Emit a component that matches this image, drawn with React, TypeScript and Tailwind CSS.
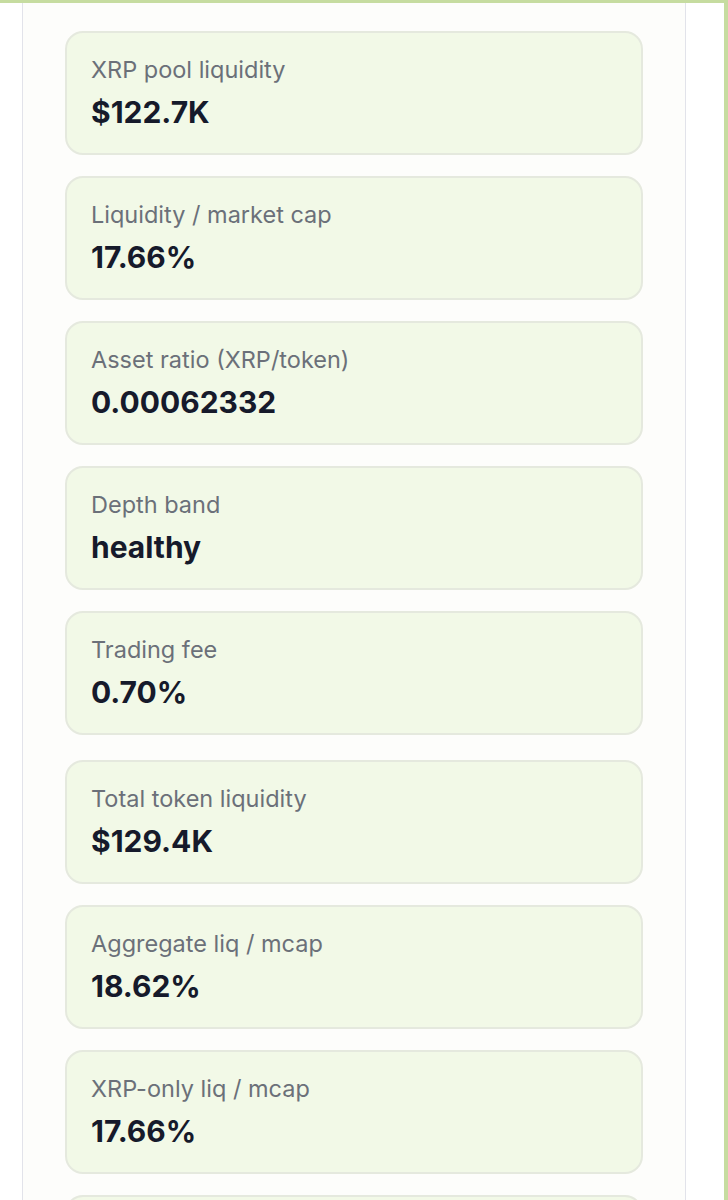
const metrics: { label: string; value: string; extra?: boolean }[] = [
  { label: 'XRP pool liquidity', value: '$122.7K' },
  { label: 'Liquidity / market cap', value: '17.66%' },
  { label: 'Asset ratio (XRP/token)', value: '0.00062332' },
  { label: 'Depth band', value: 'healthy' },
  { label: 'Trading fee', value: '0.70%' },
  { label: 'Total token liquidity', value: '$129.4K', extra: true },
  { label: 'Aggregate liq / mcap', value: '18.62%' },
  { label: 'XRP-only liq / mcap', value: '17.66%' },
  { label: '', value: '' },
];

function MetricCard({ label, value, extra }: { label: string; value: string; extra?: boolean }) {
  return (
    <div
      className={
        'shrink-0 h-[124px] rounded-[18px] border-2 border-[#e5e9de] bg-[#f2f9e7] px-6 pt-[22px] ' +
        (extra ? 'mt-[4px]' : '')
      }
    >
      <p className="text-[23.5px] leading-[30px] text-[#6b7079]">{label}</p>
      <p className="mt-[9px] text-[30px] leading-[36px] font-bold text-[#161a2b]">{value}</p>
    </div>
  );
}

export default function App() {
  return (
    <div
      className="w-[728px] h-[1200px] overflow-hidden bg-white border-t-[3px] border-r-[4px] border-[#c6dca0] flex"
      style={{ fontFamily: 'Inter, "Noto Sans", sans-serif' }}
    >
      <div className="w-[22px] shrink-0" />
      <main className="w-[664px] shrink-0 border-x border-[#e2e3ea] bg-[#fdfdfb] px-[42px] pt-[28px] flex flex-col gap-[21px]">
        {metrics.map((m, i) => (
          <MetricCard key={i} label={m.label} value={m.value} extra={m.extra} />
        ))}
      </main>
      <div className="flex-1" />
    </div>
  );
}
